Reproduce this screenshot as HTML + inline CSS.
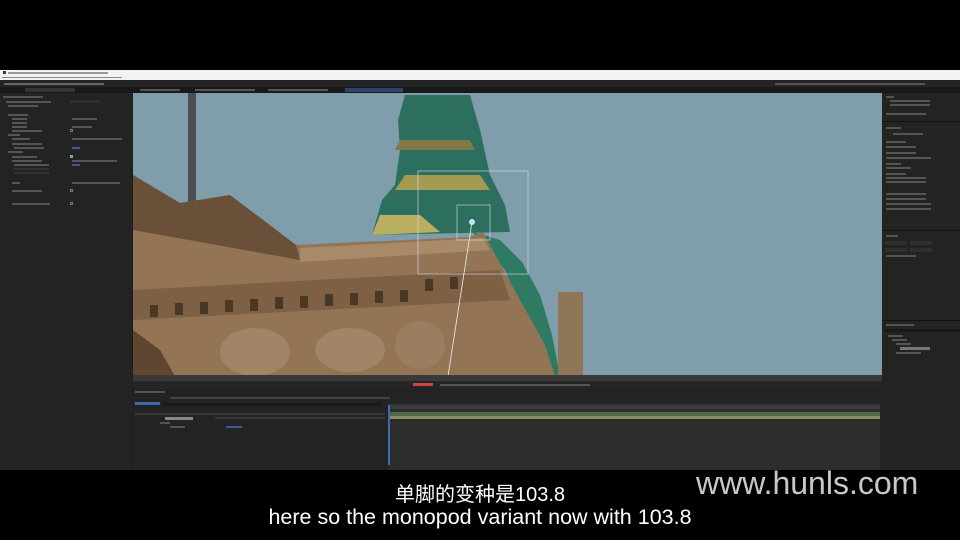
<!DOCTYPE html>
<html><head><meta charset="utf-8"><style>
*{margin:0;padding:0;box-sizing:border-box}
body{width:960px;height:540px;background:#000;position:relative;overflow:hidden;font-family:"Liberation Sans","Noto Sans CJK SC",sans-serif}
.a{position:absolute}
.row{position:absolute;height:2px;background:#555}
</style></head><body>
<div class="a" style="left:0;top:70px;width:960px;height:10px;background:#f2f2f2"></div>
<div class="a" style="left:3px;top:71px;width:3px;height:3px;background:#335"></div>
<div class="row" style="left:8px;top:72px;width:100px;background:#999"></div>
<div class="row" style="left:2px;top:77px;width:120px;background:#888;height:1px"></div>
<div class="a" style="left:0;top:80px;width:960px;height:390px;background:#1d1d1d"></div>
<div class="a" style="left:0;top:80px;width:960px;height:7px;background:#232323"></div>
<div class="row" style="left:4px;top:83px;width:100px;background:#666"></div>
<div class="row" style="left:775px;top:83px;width:150px;background:#555"></div>
<div class="a" style="left:0;top:87px;width:960px;height:6px;background:#191919"></div>
<div class="a" style="left:25px;top:88px;width:50px;height:4px;background:#333"></div>
<div class="row" style="left:140px;top:89px;width:40px"></div>
<div class="row" style="left:195px;top:89px;width:60px"></div>
<div class="row" style="left:268px;top:89px;width:60px"></div>
<div class="a" style="left:345px;top:88px;width:58px;height:4px;background:#2d4670"></div>
<div class="a" style="left:0;top:93px;width:132px;height:377px;background:#232323"></div>
<div class="row" style="left:3px;top:96px;width:40px"></div>
<div class="row" style="left:6px;top:101px;width:45px"></div>
<div class="row" style="left:8px;top:105px;width:30px"></div>
<div class="a" style="left:70px;top:100px;width:30px;height:3px;background:#2f2f2f"></div>
<div class="row" style="left:8px;top:114px;width:20px"></div>
<div class="row" style="left:12px;top:118px;width:15px"></div><div class="row" style="left:72px;top:118px;width:25px"></div>
<div class="row" style="left:12px;top:122px;width:15px"></div>
<div class="row" style="left:12px;top:126px;width:15px"></div><div class="row" style="left:72px;top:126px;width:20px"></div>
<div class="row" style="left:12px;top:130px;width:30px"></div><div class="a" style="left:70px;top:129px;width:3px;height:3px;border:1px solid #777"></div>
<div class="row" style="left:8px;top:134px;width:12px"></div>
<div class="row" style="left:12px;top:138px;width:18px"></div><div class="row" style="left:72px;top:138px;width:50px"></div>
<div class="row" style="left:12px;top:143px;width:30px"></div>
<div class="row" style="left:14px;top:147px;width:30px"></div><div class="row" style="left:72px;top:147px;width:8px;background:#3a5c98"></div>
<div class="row" style="left:8px;top:151px;width:15px"></div>
<div class="row" style="left:12px;top:156px;width:25px"></div><div class="a" style="left:70px;top:155px;width:3px;height:3px;background:#999"></div>
<div class="row" style="left:12px;top:160px;width:30px"></div><div class="row" style="left:72px;top:160px;width:45px"></div>
<div class="row" style="left:14px;top:164px;width:35px"></div><div class="row" style="left:72px;top:164px;width:8px;background:#3a5c98"></div>
<div class="row" style="left:14px;top:168px;width:35px;background:#333"></div>
<div class="row" style="left:14px;top:172px;width:35px;background:#333"></div>
<div class="row" style="left:12px;top:182px;width:8px"></div><div class="row" style="left:72px;top:182px;width:48px"></div>
<div class="row" style="left:12px;top:190px;width:30px"></div><div class="a" style="left:70px;top:189px;width:3px;height:3px;border:1px solid #777"></div>
<div class="row" style="left:12px;top:203px;width:38px"></div><div class="a" style="left:70px;top:202px;width:3px;height:3px;border:1px solid #777"></div>
<svg class="a" style="left:133px;top:93px" width="749" height="283" viewBox="133 93 749 283">
<rect x="133" y="93" width="749" height="283" fill="#7f9dab"/>
<rect x="188" y="93" width="8" height="110" fill="#4a4f50"/>
<polygon points="473,232 500,240 522,262 540,295 552,335 560,376 540,376 525,320 505,270 483,245" fill="#2f7a63"/>
<polygon points="372,235 382,200 395,185 400,150 398,120 405,95 470,95 480,130 490,175 505,205 510,232" fill="#2c6f5e"/>
<polygon points="372,235 380,215 420,215 440,232" fill="#b8b060"/>
<polygon points="395,190 405,175 480,175 490,190" fill="#a49a50"/>
<polygon points="400,140 470,140 475,150 395,150" fill="#807a48"/>
<polygon points="133,175 180,203 230,195 296,245 470,237 483,232 520,300 545,345 555,376 133,376" fill="#937555"/>
<polygon points="133,175 180,203 230,195 296,245 300,260 133,230" fill="#6a5038"/>
<polygon points="300,248 483,238 490,250 300,262" fill="#a88a68"/>
<polygon points="133,290 500,270 510,300 133,320" fill="#7e6144"/>
<g fill="#4a3826">
<rect x="150" y="305" width="8" height="12"/><rect x="175" y="303" width="8" height="12"/><rect x="200" y="302" width="8" height="12"/><rect x="225" y="300" width="8" height="12"/><rect x="250" y="299" width="8" height="12"/><rect x="275" y="297" width="8" height="12"/><rect x="300" y="296" width="8" height="12"/><rect x="325" y="294" width="8" height="12"/><rect x="350" y="293" width="8" height="12"/><rect x="375" y="291" width="8" height="12"/><rect x="400" y="290" width="8" height="12"/><rect x="425" y="279" width="8" height="12"/><rect x="450" y="277" width="8" height="12"/>
</g>
<polygon points="133,330 160,350 175,376 133,376" fill="#5e4630"/>
<ellipse cx="255" cy="352" rx="35" ry="24" fill="#a08566"/>
<ellipse cx="350" cy="350" rx="35" ry="22" fill="#a08566"/>
<ellipse cx="420" cy="345" rx="25" ry="24" fill="#9a7e60"/>
<rect x="558" y="292" width="25" height="84" fill="#8f7656"/>
<rect x="418" y="171" width="110" height="103" fill="none" stroke="#dde" stroke-width=".6"/>
<rect x="457" y="205" width="33" height="35" fill="none" stroke="#dde" stroke-width=".6"/>
<line x1="472" y1="222" x2="448" y2="376" stroke="#eee" stroke-width=".8"/>
<circle cx="472" cy="222" r="3" fill="#bfe6f0"/>
</svg>
<div class="a" style="left:882px;top:93px;width:78px;height:377px;background:#232323"></div>
<div class="row" style="left:886px;top:96px;width:8px"></div>
<div class="row" style="left:890px;top:100px;width:40px"></div><div class="row" style="left:890px;top:104px;width:40px"></div>
<div class="row" style="left:886px;top:113px;width:40px"></div>
<div class="a" style="left:882px;top:121px;width:78px;height:1px;background:#111"></div>
<div class="row" style="left:886px;top:127px;width:15px"></div><div class="row" style="left:893px;top:133px;width:30px"></div>
<div class="row" style="left:886px;top:141px;width:20px"></div><div class="row" style="left:886px;top:146px;width:30px"></div><div class="row" style="left:886px;top:152px;width:30px"></div>
<div class="row" style="left:886px;top:157px;width:45px"></div><div class="row" style="left:886px;top:163px;width:15px"></div><div class="row" style="left:886px;top:167px;width:25px"></div>
<div class="row" style="left:886px;top:173px;width:20px"></div><div class="row" style="left:886px;top:177px;width:40px"></div><div class="row" style="left:886px;top:181px;width:40px"></div>
<div class="row" style="left:886px;top:193px;width:40px"></div><div class="row" style="left:886px;top:198px;width:40px"></div><div class="row" style="left:886px;top:203px;width:45px"></div><div class="row" style="left:886px;top:208px;width:45px"></div>
<div class="a" style="left:882px;top:230px;width:78px;height:1px;background:#111"></div>
<div class="row" style="left:886px;top:235px;width:12px"></div>
<div class="a" style="left:885px;top:241px;width:22px;height:4px;background:#2e2e2e"></div><div class="a" style="left:910px;top:241px;width:22px;height:4px;background:#2e2e2e"></div>
<div class="a" style="left:885px;top:248px;width:22px;height:4px;background:#2e2e2e"></div><div class="a" style="left:910px;top:248px;width:22px;height:4px;background:#2e2e2e"></div>
<div class="row" style="left:886px;top:255px;width:30px"></div>
<div class="a" style="left:882px;top:320px;width:78px;height:1px;background:#111"></div>
<div class="row" style="left:886px;top:324px;width:28px"></div>
<div class="a" style="left:885px;top:329px;width:75px;height:3px;background:#181818"></div>
<div class="row" style="left:888px;top:335px;width:15px"></div><div class="row" style="left:892px;top:339px;width:15px"></div><div class="row" style="left:896px;top:343px;width:15px"></div>
<div class="a" style="left:900px;top:347px;width:30px;height:3px;background:#777"></div>
<div class="row" style="left:896px;top:352px;width:25px"></div>
<div class="a" style="left:133px;top:375px;width:749px;height:6px;background:#3a3a3a"></div>
<div class="a" style="left:133px;top:381px;width:749px;height:8px;background:#262626"></div>
<div class="a" style="left:413px;top:383px;width:20px;height:3px;background:#c44"></div>
<div class="row" style="left:440px;top:384px;width:150px;background:#555"></div>
<div class="a" style="left:133px;top:389px;width:749px;height:81px;background:#232323"></div>
<div class="row" style="left:135px;top:391px;width:30px"></div>
<div class="row" style="left:170px;top:397px;width:220px;background:#444"></div>
<div class="a" style="left:135px;top:402px;width:25px;height:3px;background:#3a6ab0"></div>
<div class="a" style="left:162px;top:403px;width:220px;height:3px;background:#1a1a1a"></div>
<div class="row" style="left:135px;top:413px;width:250px;background:#3a3a3a"></div>
<div class="a" style="left:165px;top:417px;width:28px;height:3px;background:#888"></div>
<div class="row" style="left:215px;top:417px;width:170px;background:#3a3a3a"></div>
<div class="row" style="left:160px;top:422px;width:10px"></div>
<div class="row" style="left:170px;top:426px;width:15px"></div><div class="row" style="left:226px;top:426px;width:16px;background:#3a5c98"></div>
<div class="a" style="left:388px;top:403px;width:492px;height:67px;background:#2c2c2c"></div>
<div class="a" style="left:388px;top:405px;width:492px;height:4px;background:#3b3b3b"></div>
<div class="a" style="left:388px;top:412px;width:492px;height:4px;background:#4f6a45"></div>
<div class="a" style="left:388px;top:416px;width:492px;height:3px;background:#8a8c63"></div>
<div class="a" style="left:388px;top:405px;width:2px;height:60px;background:#3b6db0"></div>
<div class="a" style="left:0;top:478px;width:960px;text-align:center;font-size:20px;color:#fff">单脚的变种是103.8</div>
<div class="a" style="left:0;top:505px;width:960px;text-align:center;font-size:21.5px;color:#fff">here so the monopod variant now with 103.8</div>
<div class="a" style="left:696px;top:465px;font-size:32px;color:#c8c8c8;white-space:nowrap">www.hunls.com</div>
</body></html>
